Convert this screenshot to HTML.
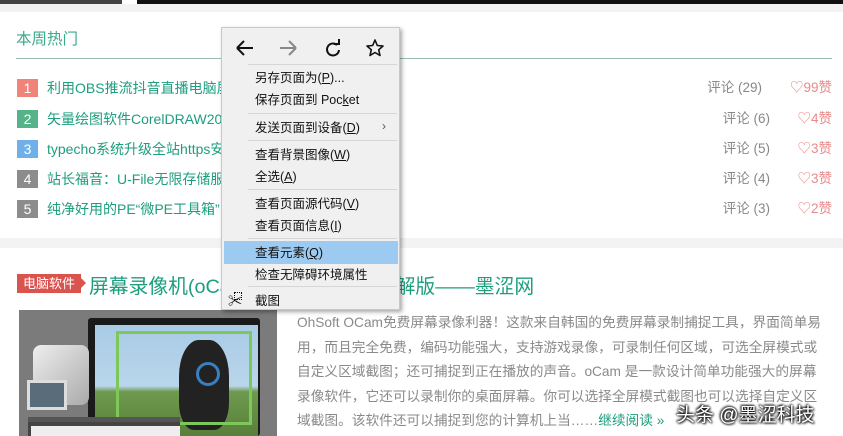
<!DOCTYPE html>
<html><head><meta charset="utf-8"><style>
*{margin:0;padding:0;box-sizing:border-box}
body{width:843px;height:436px;overflow:hidden;background:#fff;position:relative;font-family:"Liberation Sans","Noto Sans CJK SC",sans-serif}
.a{position:absolute;white-space:nowrap}
.row{position:absolute;left:17px;height:18px;width:815px}
.num{position:absolute;left:0;top:0;width:21px;height:18px;color:#fff;font-size:14px;text-align:center;line-height:18px}
.t{position:absolute;left:30px;top:-1px;font-size:14px;color:#1d9e7e;line-height:20px}
.c{position:absolute;right:62px;top:-1px;font-size:13.5px;color:#888;line-height:20px}
.h{position:absolute;right:0;top:-1px;font-size:13.5px;color:#e98a8a;line-height:20px}
.p{position:absolute;left:297px;font-size:13.7px;color:#8a8a8a;line-height:24.5px;width:545px}
.menu{position:absolute;left:221px;top:27px;width:179px;height:283px;background:#f0f0f0;border:1px solid #c8c8c8;box-shadow:2px 2px 4px rgba(0,0,0,.35);font-size:12.5px;color:#111}
.mi{position:absolute;left:33px;line-height:16px}
.sep{position:absolute;left:26px;right:2px;height:1px;background:#d6d6d6}
</style></head><body>
<div class="a" style="left:0;top:0;width:122px;height:4px;background:#444"></div>
<div class="a" style="left:137px;top:0;width:706px;height:4px;background:#111"></div>
<div class="a" style="left:0;top:4px;width:843px;height:8px;background:#f3f3f3"></div>
<div class="a" style="left:16px;top:27px;font-size:15.5px;color:#3aaa8a">本周热门</div>
<div class="a" style="left:16px;top:58px;width:816px;height:1px;background:#9cbfb4"></div>

<div class="row" style="top:79px"><div class="num" style="background:#f0837a">1</div><div class="t">利用OBS推流抖音直播电脑屏幕</div><div class="c" style="right:70px">评论 (29)</div><div class="h">♡99赞</div></div>
<div class="row" style="top:110px"><div class="num" style="background:#55b38a">2</div><div class="t">矢量绘图软件CorelDRAW2019中文破解版——墨涩网</div><div class="c">评论 (6)</div><div class="h">♡4赞</div></div>
<div class="row" style="top:140px"><div class="num" style="background:#6fb0e8">3</div><div class="t">typecho系统升级全站https安全访问教程——墨涩网</div><div class="c">评论 (5)</div><div class="h">♡3赞</div></div>
<div class="row" style="top:170px"><div class="num" style="background:#8c8c8c">4</div><div class="t">站长福音：U-File无限存储服务——墨涩网</div><div class="c">评论 (4)</div><div class="h">♡3赞</div></div>
<div class="row" style="top:200px"><div class="num" style="background:#8c8c8c">5</div><div class="t">纯净好用的PE“微PE工具箱”</div><div class="c">评论 (3)</div><div class="h">♡2赞</div></div>

<div class="a" style="left:0;top:238px;width:843px;height:10px;background:#f3f3f3"></div>

<div class="a" style="left:17px;top:274px;width:64px;height:19px;background:#d9534f;color:#fff;font-size:13px;line-height:19px;text-align:center">电脑软件</div>
<div class="a" style="left:81px;top:278px;width:0;height:0;border-left:5px solid #d9534f;border-top:5px solid transparent;border-bottom:5px solid transparent"></div>
<div class="a" style="left:89px;top:270px;font-size:19.8px;color:#1d9e7e">屏幕录像机(oCam)v475中文绿色破解版——墨涩网</div>

<div class="a" style="left:19px;top:310px;width:258px;height:126px;background:#7b7b7b;overflow:hidden">
 <div class="a" style="left:69px;top:8px;width:172px;height:118px;background:#1a1a1a;border-radius:3px"></div>
 <div class="a" style="left:76px;top:15px;width:163px;height:111px;background:linear-gradient(#a9cbe6 0%,#b9d6ea 55%,#6f9a4e 60%,#587f3a 100%)"></div>
 <div class="a" style="left:160px;top:30px;width:50px;height:90px;background:#222;border-radius:40% 40% 30% 30%"></div>
 <div class="a" style="left:177px;top:52px;width:24px;height:24px;border-radius:50%;border:3px solid #3a7fc0"></div>
 <div class="a" style="left:97px;top:21px;width:136px;height:94px;border:3px solid #7cc85a"></div>
 <div class="a" style="left:14px;top:35px;width:56px;height:60px;background:linear-gradient(135deg,#eee,#aaa);border-radius:8px"></div>
 <div class="a" style="left:8px;top:70px;width:40px;height:30px;background:#5a6b7a;border:3px solid #ddd"></div>
 <div class="a" style="left:9px;top:107px;width:152px;height:19px;background:#444;border-top:5px solid #555"></div>
 <div class="a" style="left:12px;top:116px;width:149px;height:10px;background:#eee"></div>
</div>

<div class="p" style="top:311px">OhSoft OCam免费屏幕录像利器！这款来自韩国的免费屏幕录制捕捉工具，界面简单易<br>用，而且完全免费，编码功能强大，支持游戏录像，可录制任何区域，可选全屏模式或<br>自定义区域截图；还可捕捉到正在播放的声音。oCam 是一款设计简单功能强大的屏幕<br>录像软件，它还可以录制你的桌面屏幕。你可以选择全屏模式截图也可以选择自定义区<br>域截图。该软件还可以捕捉到您的计算机上当……<span style="color:#1d9e7e">继续阅读 »</span></div>
<div class="a" style="left:676px;top:400px;font-size:19px;color:#fff;text-shadow:0 0 2px #000,1px 1px 2px #000,-1px -1px 2px #000">头条 @墨涩科技</div>

<div class="menu">
 <svg class="a" style="left:12px;top:10px" width="150" height="20" viewBox="0 0 150 20" fill="none" stroke-width="2">
  <path d="M3 10H19M3 10L10 3M3 10L10 17" stroke="#111"/>
  <path d="M46 10H62M62 10L55 3M62 10L55 17" stroke="#888"/>
  <path d="M103 5A6 6 0 1 0 105 10M100 4H105V-1" stroke="#111" transform="translate(0,2)"/>
  <path d="M141 2L143.3 7.5L149 8L144.7 11.8L146 17.5L141 14.5L136 17.5L137.3 11.8L133 8L138.7 7.5Z" stroke="#111" stroke-width="1.6" stroke-linejoin="round"/>
 </svg>
 <div class="sep" style="top:36px"></div>
 <div class="mi" style="top:42px">另存页面为(<u>P</u>)...</div>
 <div class="mi" style="top:64px">保存页面到 Poc<u>k</u>et</div>
 <div class="sep" style="top:85px"></div>
 <div class="mi" style="top:92px">发送页面到设备(<u>D</u>)</div>
 <div class="a" style="left:160px;top:91px;color:#555;font-size:12px">›</div>
 <div class="sep" style="top:112px"></div>
 <div class="mi" style="top:119px">查看背景图像(<u>W</u>)</div>
 <div class="mi" style="top:141px">全选(<u>A</u>)</div>
 <div class="sep" style="top:161px"></div>
 <div class="mi" style="top:168px">查看页面源代码(<u>V</u>)</div>
 <div class="mi" style="top:190px">查看页面信息(<u>I</u>)</div>
 <div class="sep" style="top:210px"></div>
 <div class="a" style="left:2px;top:213px;width:174px;height:23px;background:#9ccaf0"></div>
 <div class="mi" style="top:217px">查看元素(<u>Q</u>)</div>
 <div class="mi" style="top:239px">检查无障碍环境属性</div>
 <div class="sep" style="top:258px"></div>
 <div class="a" style="left:6px;top:266px;font-size:14px;line-height:14px">✂</div>
 <div class="a" style="left:12px;top:264px;width:8px;height:8px;border:1px dotted #111"></div>
 <div class="mi" style="top:265px">截图</div>
</div>
</body></html>
